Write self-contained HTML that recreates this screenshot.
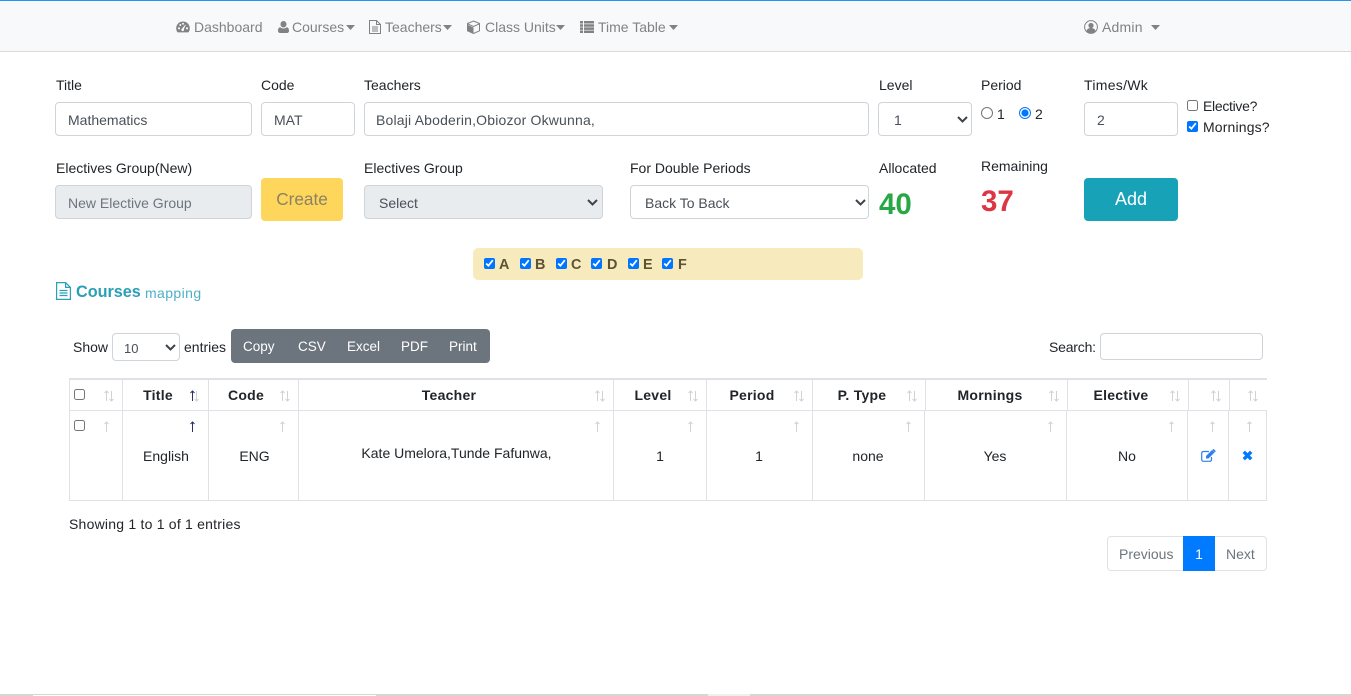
<!DOCTYPE html>
<html><head><meta charset="utf-8"><title>Courses mapping</title>
<style>
html,body{margin:0;padding:0;background:#fff}
#p{position:relative;width:1351px;height:696px;overflow:hidden;background:#fff;font-family:"Liberation Sans",sans-serif;font-size:14px;color:#212529}
#p div,#p span.t,#p svg,#p input{position:absolute}
.t{white-space:nowrap;line-height:20px;margin-top:1px}
.c{transform:translateX(-50%)}
.n{color:#808285}
.box{box-sizing:border-box;border:1px solid #ced4da;border-radius:4px;background:#fff;height:34px;line-height:34px;color:#495057;padding-left:12px;white-space:nowrap}
.dis{background:#e9ecef}
.btn{border-radius:4px;text-align:center;font-size:18px;line-height:42px;height:43px}
.ln{background:#dee2e6}
.h{font-weight:bold;letter-spacing:.25px}
.cb{margin:0;width:11px;height:11px}
.rd{margin:0;width:12px;height:12px}
.w{color:#fff}
.ar{stroke:#d2d2d2;stroke-width:1;fill:none}
.lt{font-weight:bold;color:#5d5233;font-size:14.4px}
.bt{font-size:13.5px}
</style></head><body><div id="p">

<div style="left:0;top:0;width:1351px;height:52px;background:#f8f9fa;box-sizing:border-box;border-bottom:1px solid #d9d9d9"></div>
<div style="left:0;top:0;width:1351px;height:1px;background:#2196f3"></div>

<svg style="left:176px;top:20px" width="14" height="14" viewBox="0 0 14 14"><path fill="#808285" fill-rule="evenodd" d="M7 1.500C3.200 1.500.2 4.500.2 8.300c0 1.600.5 3 1.400 4.100h10.800c.9-1.100 1.400-2.500 1.400-4.100 0-3.800-3-6.800-6.800-6.800zM3 9.400a1.100 1.100 0 1 1 0-2.200 1.100 1.100 0 0 1 0 2.200zM4.300 6a1 1 0 1 1 0-2 1 1 0 0 1 0 2zM7 4.800a1 1 0 1 1 0-2 1 1 0 0 1 0 2zM8.100 9.600a1.400 1.400 0 1 1-2-1.100L9.300 4.600l.5.300-1.800 4zM11 9.400a1.100 1.100 0 1 1 0-2.200 1.100 1.100 0 0 1 0 2.200z"/></svg>
<span class="t n" style="left:194px;top:16px">Dashboard</span>
<svg style="left:278px;top:20px" width="11" height="14" viewBox="0 0 11 14"><path fill="#808285" d="M5.500 1a3 3 0 0 1 3 3.200c0 1.700-1.300 3.200-3 3.200s-3-1.500-3-3.200A3 3 0 0 1 5.500 1zM2.300 7.300c.8.800 1.900 1.200 3.200 1.200s2.400-.4 3.200-1.200c1.500.1 2.300 1.400 2.300 3.600 0 1.300-.8 2.100-2 2.100H2C.8 13 0 12.200 0 10.900c0-2.200.8-3.500 2.300-3.600z"/></svg>
<span class="t n" style="left:292px;top:16px">Courses</span>
<svg style="left:346px;top:25px" width="9" height="5"><path fill="#808285" d="M0 0h9L4.500 5z"/></svg>
<svg style="left:369px;top:20px" width="12" height="14" viewBox="0 0 12 14"><path fill="none" stroke="#808285" d="M.5.500h7l4 4v9H.5zM7.500.5v4h4M3 7h6M3 9h6M3 11h6"/></svg>
<span class="t n" style="left:385px;top:16px">Teachers</span>
<svg style="left:443px;top:25px" width="9" height="5"><path fill="#808285" d="M0 0h9L4.500 5z"/></svg>
<svg style="left:466px;top:20px" width="15" height="14" viewBox="0 0 15 14"><path fill="#808285" d="M7.500 7.500v6L1.500 11V4.800z"/><path fill="none" stroke="#808285" d="M7.500 1l6 2.500V10.800L7.500 13.500 1.500 10.800V3.500zM1.500 3.800l6 2.700 6-2.700"/></svg>
<span class="t n" style="left:485px;top:16px">Class Units</span>
<svg style="left:556px;top:25px" width="9" height="5"><path fill="#808285" d="M0 0h9L4.500 5z"/></svg>
<svg style="left:580px;top:21px" width="14" height="12" viewBox="0 0 14 12"><path fill="#808285" d="M0 0h3v2.500H0zM4 0h10v2.500H4zM0 3.200h3v2.500H0zM4 3.200h10v2.500H4zM0 6.400h3v2.500H0zM4 6.400h10v2.500H4zM0 9.500h3V12H0zM4 9.500h10V12H4z"/></svg>
<span class="t n" style="left:598px;top:16px">Time Table</span>
<svg style="left:669px;top:25px" width="9" height="5"><path fill="#808285" d="M0 0h9L4.500 5z"/></svg>
<svg style="left:1084px;top:20px" width="14" height="14" viewBox="0 0 14 14"><circle cx="7" cy="7" r="6.400" fill="none" stroke="#808285"/><circle cx="7" cy="5.500" r="2.600" fill="#808285"/><path fill="#808285" d="M2.500 11c.5-2 2-3 4.500-3s4 1 4.500 3C10.500 12.300 9 13 7 13s-3.500-.7-4.500-2z"/></svg>
<span class="t n" style="left:1102px;top:16px;letter-spacing:.2px">Admin</span>
<svg style="left:1151px;top:25px" width="9" height="5"><path fill="#808285" d="M0 0h9L4.500 5z"/></svg>

<span class="t" style="left:56px;top:74px">Title</span>
<span class="t" style="left:261px;top:74px">Code</span>
<span class="t" style="left:364px;top:74px">Teachers</span>
<span class="t" style="left:879px;top:74px">Level</span>
<span class="t" style="left:981px;top:74px">Period</span>
<span class="t" style="left:1084px;top:74px;letter-spacing:.3px">Times/Wk</span>

<div class="box" style="left:55px;top:102px;width:197px">Mathematics</div>
<div class="box" style="left:261px;top:102px;width:94px">MAT</div>
<div class="box" style="left:364px;top:102px;width:505px;letter-spacing:.18px;padding-left:11px">Bolaji Aboderin,Obiozor Okwunna,</div>
<div class="box" style="left:878px;top:102px;width:94px;padding-left:15px">1</div>
<svg style="left:957px;top:116px" width="11" height="7"><path d="M1 1l4.500 4.500L10 1" fill="none" stroke="#3d4348" stroke-width="2"/></svg>
<input type="radio" class="rd" style="left:981px;top:107px"><span class="t" style="left:997px;top:103px">1</span>
<input type="radio" class="rd" checked style="left:1019px;top:107px"><span class="t" style="left:1035px;top:103px">2</span>
<div class="box" style="left:1084px;top:102px;width:94px">2</div>
<input type="checkbox" class="cb" style="left:1187px;top:100px"><span class="t" style="left:1203px;top:95px;letter-spacing:-.3px">Elective?</span>
<input type="checkbox" class="cb" checked style="left:1187px;top:121px"><span class="t" style="left:1203px;top:116px;letter-spacing:.15px">Mornings?</span>

<span class="t" style="left:56px;top:157px">Electives Group(New)</span>
<span class="t" style="left:364px;top:157px">Electives Group</span>
<span class="t" style="left:630px;top:157px">For Double Periods</span>
<span class="t" style="left:879px;top:157px">Allocated</span>
<span class="t" style="left:981px;top:155px">Remaining</span>

<div class="box dis" style="left:55px;top:185px;width:197px;color:#6c757d">New Elective Group</div>
<div class="btn" style="left:261px;top:178px;width:82px;background:#ffd65c;color:#8a8263;font-size:17.2px">Create</div>
<div class="box dis" style="left:364px;top:185px;width:239px;padding-left:14px">Select</div>
<svg style="left:587px;top:199px" width="11" height="7"><path d="M1 1l4.500 4.500L10 1" fill="none" stroke="#3d4348" stroke-width="2"/></svg>
<div class="box" style="left:630px;top:185px;width:239px;padding-left:14px">Back To Back</div>
<svg style="left:855px;top:199px" width="11" height="7"><path d="M1 1l4.500 4.500L10 1" fill="none" stroke="#3d4348" stroke-width="2"/></svg>
<span class="t" style="left:879px;top:189px;font-weight:bold;font-size:29.500px;line-height:30px;color:#28a745">40</span>
<span class="t" style="left:981px;top:186px;font-weight:bold;font-size:29.500px;line-height:30px;color:#dc3545">37</span>
<div class="btn w" style="left:1084px;top:178px;width:94px;background:#17a2b8">Add</div>

<div style="left:473px;top:248px;width:390px;height:32px;background:#f7ebbd;border-radius:5px"></div>
<input type="checkbox" class="cb" checked style="left:484px;top:258px"><span class="t lt" style="left:499px;top:254px">A</span>
<input type="checkbox" class="cb" checked style="left:520px;top:258px"><span class="t lt" style="left:535px;top:254px">B</span>
<input type="checkbox" class="cb" checked style="left:556px;top:258px"><span class="t lt" style="left:571px;top:254px">C</span>
<input type="checkbox" class="cb" checked style="left:591px;top:258px"><span class="t lt" style="left:607px;top:254px">D</span>
<input type="checkbox" class="cb" checked style="left:628px;top:258px"><span class="t lt" style="left:643px;top:254px">E</span>
<input type="checkbox" class="cb" checked style="left:662px;top:258px"><span class="t lt" style="left:678px;top:254px">F</span>

<svg style="left:56px;top:282px" width="15" height="18" viewBox="0 0 15 18"><path fill="none" stroke="#2a9fb6" stroke-width="1.200" d="M.6.600h9l4.800 4.800v12H.6zM9.600.6v4.800h4.800M3.500 8.500h8M3.500 11h8M3.500 13.500h8"/></svg>
<span class="t" style="left:76px;top:281px;font-weight:bold;font-size:16.200px;color:#2a9fb6">Courses</span>
<span class="t" style="left:145px;top:282px;color:#4db0c4;letter-spacing:.4px">mapping</span>

<span class="t" style="left:73px;top:336px">Show</span>
<div class="box" style="left:112px;top:333px;width:68px;height:28px;line-height:29px;font-size:13px;padding-left:11px">10</div>
<svg style="left:165px;top:344px" width="11" height="7"><path d="M1 1l4.500 4.500L10 1" fill="none" stroke="#3d4348" stroke-width="2"/></svg>
<span class="t" style="left:184px;top:336px">entries</span>
<div style="left:231px;top:329px;width:259px;height:34px;background:#6c757d;border-radius:4px"></div>
<span class="t w bt" style="left:243px;top:336px">Copy</span>
<span class="t w bt" style="left:298px;top:336px">CSV</span>
<span class="t w bt" style="left:347px;top:336px">Excel</span>
<span class="t w bt" style="left:401px;top:336px">PDF</span>
<span class="t w bt" style="left:449px;top:336px">Print</span>
<span class="t" style="left:1049px;top:336px;letter-spacing:-.2px">Search:</span>
<div class="box" style="left:1100px;top:333px;width:163px;height:27px"></div>

<div class="ln" style="left:69px;top:378px;width:1198px;height:2px"></div>
<div class="ln" style="left:69px;top:410px;width:1198px;height:1px"></div>
<div class="ln" style="left:69px;top:500px;width:1198px;height:1px"></div>

<div class="ln" style="left:69px;top:380px;width:1px;height:120px"></div>
<div class="ln" style="left:122px;top:380px;width:1px;height:120px"></div>
<div class="ln" style="left:208px;top:380px;width:1px;height:120px"></div>
<div class="ln" style="left:298px;top:380px;width:1px;height:120px"></div>
<div class="ln" style="left:613px;top:380px;width:1px;height:120px"></div>
<div class="ln" style="left:706px;top:380px;width:1px;height:120px"></div>
<div class="ln" style="left:812px;top:380px;width:1px;height:120px"></div>
<div class="ln" style="left:925px;top:380px;width:1px;height:30px"></div>
<div class="ln" style="left:924px;top:411px;width:1px;height:89px"></div>
<div class="ln" style="left:1067px;top:380px;width:1px;height:30px"></div>
<div class="ln" style="left:1066px;top:411px;width:1px;height:89px"></div>
<div class="ln" style="left:1188px;top:380px;width:1px;height:30px"></div>
<div class="ln" style="left:1187px;top:411px;width:1px;height:89px"></div>
<div class="ln" style="left:1229px;top:380px;width:1px;height:30px"></div>
<div class="ln" style="left:1228px;top:411px;width:1px;height:89px"></div>
<div class="ln" style="left:1266px;top:411px;width:1px;height:89px"></div>

<input type="checkbox" class="cb" style="left:74px;top:389px">
<input type="checkbox" class="cb" style="left:74px;top:420px">

<span class="t h c" style="left:158px;top:384px">Title</span>
<span class="t h c" style="left:246px;top:384px">Code</span>
<span class="t h c" style="left:449px;top:384px">Teacher</span>
<span class="t h c" style="left:653px;top:384px">Level</span>
<span class="t h c" style="left:752px;top:384px">Period</span>
<span class="t h c" style="left:862px;top:384px">P. Type</span>
<span class="t h c" style="left:990px;top:384px">Mornings</span>
<span class="t h c" style="left:1121px;top:384px">Elective</span>

<svg style="left:0;top:0" width="1351" height="696">
<g class="ar" fill="none">
<path d="M106.500 391v10M104.500 393l2-2 2 2M111.500 391v10M109.500 399l2 2 2-2"/>
<path d="M196.500 391v10M194.500 399l2 2 2-2"/>
<path d="M282.500 391v10M280.500 393l2-2 2 2M287.500 391v10M285.500 399l2 2 2-2"/>
<path d="M597.500 391v10M595.500 393l2-2 2 2M602.500 391v10M600.500 399l2 2 2-2"/>
<path d="M690.500 391v10M688.500 393l2-2 2 2M695.500 391v10M693.500 399l2 2 2-2"/>
<path d="M796.500 391v10M794.500 393l2-2 2 2M801.500 391v10M799.500 399l2 2 2-2"/>
<path d="M909.500 391v10M907.500 393l2-2 2 2M914.500 391v10M912.500 399l2 2 2-2"/>
<path d="M1051.500 391v10M1049.500 393l2-2 2 2M1056.500 391v10M1054.500 399l2 2 2-2"/>
<path d="M1172.500 391v10M1170.500 393l2-2 2 2M1177.500 391v10M1175.500 399l2 2 2-2"/>
<path d="M1213.500 391v10M1211.500 393l2-2 2 2M1218.500 391v10M1216.500 399l2 2 2-2"/>
<path d="M1250.500 391v10M1248.500 393l2-2 2 2M1255.500 391v10M1253.500 399l2 2 2-2"/>
<path d="M106.500 422v10M104.500 424l2-2 2 2"/>
<path d="M282.500 422v10M280.500 424l2-2 2 2"/>
<path d="M597.500 422v10M595.500 424l2-2 2 2"/>
<path d="M690.500 422v10M688.500 424l2-2 2 2"/>
<path d="M796.500 422v10M794.500 424l2-2 2 2"/>
<path d="M908.500 422v10M906.500 424l2-2 2 2"/>
<path d="M1050.500 422v10M1048.500 424l2-2 2 2"/>
<path d="M1171.500 422v10M1169.500 424l2-2 2 2"/>
<path d="M1212.500 422v10M1210.500 424l2-2 2 2"/>
<path d="M1249.500 422v10M1247.500 424l2-2 2 2"/>
</g>
<path d="M192.500 391v10M190.500 393l2-2 2 2M192.500 422v10M190.500 424l2-2 2 2" fill="none" stroke="#2b2f6b"/>
</svg>

<span class="t c" style="left:166px;top:445px">English</span>
<span class="t c" style="left:254.500px;top:445px">ENG</span>
<span class="t c" style="left:456.500px;top:442px">Kate Umelora,Tunde Fafunwa,</span>
<span class="t c" style="left:660px;top:445px">1</span>
<span class="t c" style="left:759px;top:445px">1</span>
<span class="t c" style="left:868px;top:445px">none</span>
<span class="t c" style="left:995px;top:445px">Yes</span>
<span class="t c" style="left:1127px;top:445px">No</span>
<svg style="left:1201px;top:449px" width="15" height="13" viewBox="0 0 15 13"><path fill="none" stroke="#2f80ed" stroke-width="1.200" d="M10.500 8v2.500c0 1-.7 1.800-1.800 1.800H2.500C1.400 12.300.7 11.500.7 10.500V4.300c0-1 .7-1.800 1.800-1.800H8"/><path fill="#2f80ed" d="M5 7l6-6 2.500 2.500-6 6H5zM12 .3l.7-.3 2 2-.3.700-.8.700L11.300 1z"/></svg>
<svg style="left:1242px;top:450px" width="11" height="11" viewBox="0 0 11 11"><path d="M1.800 1.800l7.400 7.400M9.200 1.800l-7.400 7.400" fill="none" stroke="#007bff" stroke-width="3.400"/></svg>

<span class="t" style="left:69px;top:513px;letter-spacing:.22px">Showing 1 to 1 of 1 entries</span>

<div style="left:1107px;top:536px;width:160px;height:35px;box-sizing:border-box;border:1px solid #dee2e6;border-radius:4px"></div>
<div style="left:1183px;top:536px;width:32px;height:35px;background:#007bff"></div>
<span class="t" style="left:1119px;top:543px;color:#6c757d">Previous</span>
<span class="t w c" style="left:1199px;top:543px">1</span>
<span class="t" style="left:1226px;top:543px;color:#6c757d">Next</span>

<div style="left:0;top:694px;width:1351px;height:2px;background:#d6d6d6"></div>
<div style="left:33px;top:695px;width:343px;height:1px;background:#fff"></div>
<div style="left:708px;top:694px;width:42px;height:2px;background:#efefef"></div>
</div></body></html>
